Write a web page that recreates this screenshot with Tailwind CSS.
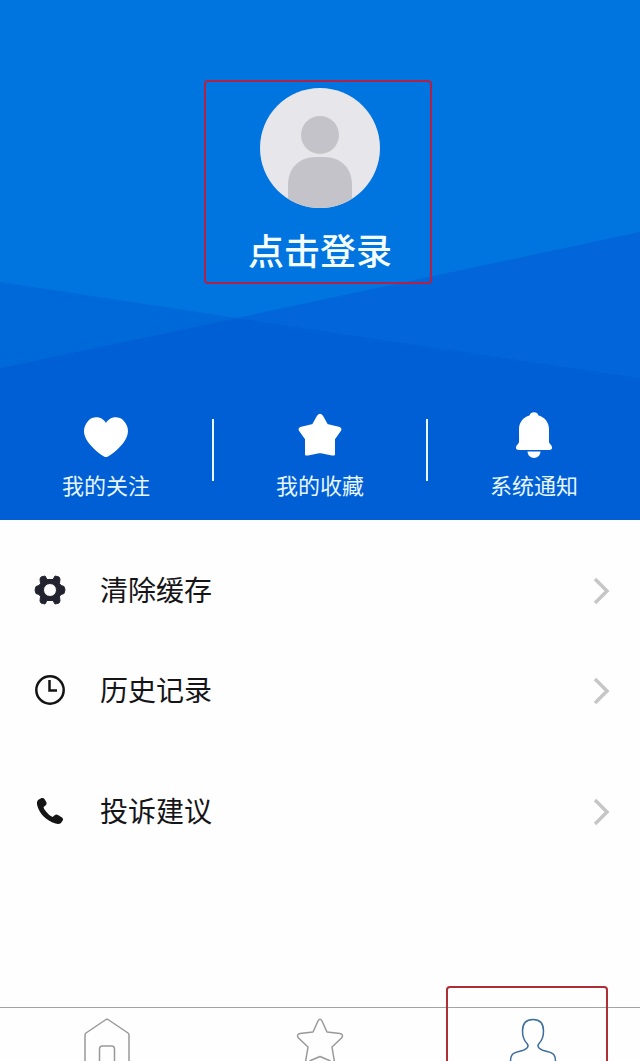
<!DOCTYPE html>
<html lang="zh-CN">
<head>
    <meta charset="UTF-8">
    <meta name="viewport" content="width=device-width, initial-scale=1.0">
    <title>个人中心</title>
    <script src="https://cdn.jsdelivr.net/npm/@tailwindcss/browser@4"></script>
    <style>
        body {
            font-family: 'Noto Sans CJK SC', sans-serif;
        }
    </style>
</head>
<body class="bg-[#fefefe]">
    <div class="relative flex h-[1061px] w-[640px] flex-col overflow-hidden">

        <!-- Profile Header -->
        <header class="relative flex h-[520px] shrink-0 flex-col items-center bg-[#0074df] text-white">
            <!-- Background facets -->
            <svg class="absolute inset-0" width="640" height="520" viewBox="0 0 640 520">
                <path d="M0 282L237 318L0 368Z" fill="#0069d9"/>
                <path d="M237 318L640 232V378Z" fill="#0265da"/>
                <path d="M0 368L237 318L640 378V520H0Z" fill="#005fd5"/>
            </svg>

            <!-- Login -->
            <div class="relative mt-20 flex h-[204px] w-[228px] -translate-x-0.5 flex-col items-center rounded-sm border-2 border-[#b02248] pt-1.5">
                <svg class="ml-1 shrink-0" width="120" height="120" viewBox="0 0 120 120">
                    <clipPath id="avatar"><circle cx="60" cy="60" r="60"/></clipPath>
                    <g clip-path="url(#avatar)">
                        <rect width="120" height="120" fill="#e7e6ea"/>
                        <circle cx="60" cy="47" r="19" fill="#c5c3ca"/>
                        <path d="M28 120V97C28 80 39 69 56 69H64C81 69 92 80 92 97V120Z" fill="#c5c3ca"/>
                    </g>
                </svg>
                <span class="mt-[17px] ml-1 text-[36px] leading-12 font-medium text-[#f4fdff]">点击登录</span>
            </div>

            <!-- Shortcuts -->
            <div class="relative mt-[126px] flex w-full">
                <a href="#" class="flex flex-1 flex-col items-center">
                    <svg width="48" height="50" viewBox="0 0 48 50" fill="white">
                        <path d="M24 13C20 6 11 6 7 10C0 17 1 25 6 32C11 39 18 44 22 46.500Q24 47.500 26 46.500C30 44 37 39 42 32C47 25 48 17 41 10C37 6 28 6 24 13Z"/>
                    </svg>
                    <span class="mt-2 text-[22px] leading-8 text-[#e6f6ff]">我的关注</span>
                </a>
                <div class="mt-[9px] h-[62px] w-0.5 bg-[#e5f8ff]"></div>
                <a href="#" class="flex flex-1 flex-col items-center">
                    <svg width="48" height="50" viewBox="0 0 48 50" fill="white" stroke="white" stroke-width="2" stroke-linejoin="round">
                        <path d="M22 6Q24 3.500 26 6L31 15L43.500 18Q45 19 44 20.500L38 29V44.500H36L24 42L12 44.500H10V29L4 20.500Q3 19 4.500 18L17 15Z"/>
                    </svg>
                    <span class="mt-2 text-[22px] leading-8 text-[#e6f6ff]">我的收藏</span>
                </a>
                <div class="mt-[9px] h-[62px] w-0.5 bg-[#e5f8ff]"></div>
                <a href="#" class="flex flex-1 flex-col items-center">
                    <svg width="48" height="50" viewBox="0 0 48 50" fill="white">
                        <path d="M19.500 5.500C20 1 28 1 28.500 5.500C35 7 39 13 39 19V32C39 34 42 35 42 37Q42.500 40 39 40H9Q5.500 40 6 37C6 35 9 34 9 32V19C9 13 13 7 19.500 5.500Z"/>
                        <path d="M17.500 41.500H30.500C30 50 18 50 17.500 41.500Z"/>
                    </svg>
                    <span class="mt-2 text-[22px] leading-8 text-[#e6f6ff]">系统通知</span>
                </a>
            </div>
        </header>

        <!-- Menu -->
        <main class="flex flex-col px-[34px] pt-5 text-[28px] text-[#151518]">
            <a href="#" class="flex h-[100px] items-center">
                <svg width="32" height="32" viewBox="0 0 32 32">
                    <path fill="#22232f" stroke="#22232f" stroke-linejoin="round" fill-rule="evenodd" d="M7 3L11 2L13 5.500H19L21 2L25 3L26 5L25.500 9.500L27 11.500L30 12.500L31 16L30 19.500L27 20.500L25.500 22.500L26 27L25 29L21 30L19 26.500H13L11 30L7 29L6 27L6.500 22.500L5 20.500L2 19.500L1 16L2 12.500L5 11.500L6.500 9.500L6 5ZM16 9.500A6.500 6.500 0 1 0 16 22.500A6.500 6.500 0 1 0 16 9.500Z"/>
                </svg>
                <span class="mb-0.5 ml-[34px] flex-1 leading-10">清除缓存</span>
                <svg class="-mr-1" width="18" height="28" viewBox="0 0 18 28" fill="none" stroke="#c6c6c6" stroke-width="3.500"><path d="M3 3L15 15L3 27"/></svg>
            </a>
            <a href="#" class="flex h-[100px] items-center">
                <svg width="32" height="32" viewBox="0 0 32 32" fill="none" stroke="#141414" stroke-width="2.500">
                    <circle cx="16" cy="16" r="13.700"/>
                    <path d="M15.500 6V16.500H23"/>
                </svg>
                <span class="mb-0.5 ml-[34px] flex-1 leading-10">历史记录</span>
                <svg class="-mr-1" width="18" height="28" viewBox="0 0 18 28" fill="none" stroke="#c6c6c6" stroke-width="3.500"><path d="M3 3L15 15L3 27"/></svg>
            </a>
            <a href="#" class="mt-[21px] flex h-[100px] items-center">
                <svg width="32" height="32" viewBox="0 0 32 32">
                    <path fill="#151515" d="M4 5L7.500 3Q9.500 2.500 10.500 4L12.500 7.500Q13 9.500 11.500 10.500L9.500 12Q9.500 13.500 12 16.500Q15 20.500 18.500 22L21 20Q22.500 19 24 20L28 22.500Q29.500 23.500 29 25L27 28Q25 29.500 21.500 28.500C12 25.500 5 18.500 3 9.500Q2.500 6.500 4 5Z"/>
                </svg>
                <span class="mb-0.5 ml-[34px] flex-1 leading-10">投诉建议</span>
                <svg class="-mr-1" width="18" height="28" viewBox="0 0 18 28" fill="none" stroke="#c6c6c6" stroke-width="3.500"><path d="M3 3L15 15L3 27"/></svg>
            </a>
        </main>

        <!-- Tab Bar -->
        <nav class="mt-auto flex h-[54px] shrink-0 border-t border-[#a3a3a3]">
            <a href="#" class="flex flex-1 justify-center">
                <svg width="54" height="53" viewBox="0 0 54 53" fill="none" stroke="#999999" stroke-width="1.500" stroke-linejoin="round">
                    <path d="M5 54V27Q5 26 6 25L26 11.500Q27 11 28 11.500L48 25Q49 26 49 27V54"/>
                    <path d="M19.500 54V41Q19.500 38 22.500 38H31.500Q34.500 38 34.500 41V54"/>
                </svg>
            </a>
            <a href="#" class="flex flex-1 justify-center">
                <svg width="54" height="53" viewBox="0 0 54 53" fill="none" stroke="#999999" stroke-width="1.500" stroke-linejoin="round">
                    <path d="M12.500 54L15 39L5.500 30Q3 26.500 7 25.500L20 24L25 13Q27 9.500 29 13L34 24L47 25.500Q51 26.500 48.500 30L39 39L41.500 54M16.500 53L27 48.500L37.500 53"/>
                </svg>
            </a>
            <a href="#" class="flex flex-1 justify-center">
                <svg width="54" height="53" viewBox="0 0 54 53" fill="none" stroke="#3b6d9e" stroke-width="1.500">
                    <path d="M4.500 54C4.500 47 6 45 13 43.500C20 42 24 39 21 35.500C17.500 32 16.500 27 16.500 23C16.500 15 20 11.500 27 11.500C34 11.500 37.500 15 37.500 23C37.500 27 36.500 32 33 35.500C30 39 34 42 41 43.500C48 45 49.500 47 49.500 54"/>
                </svg>
            </a>
        </nav>

        <!-- Highlight around the profile tab -->
        <div class="absolute top-[986px] left-[446px] h-20 w-[162px] rounded-sm border-2 border-[#ad2f35]"></div>
    </div>
</body>
</html>
